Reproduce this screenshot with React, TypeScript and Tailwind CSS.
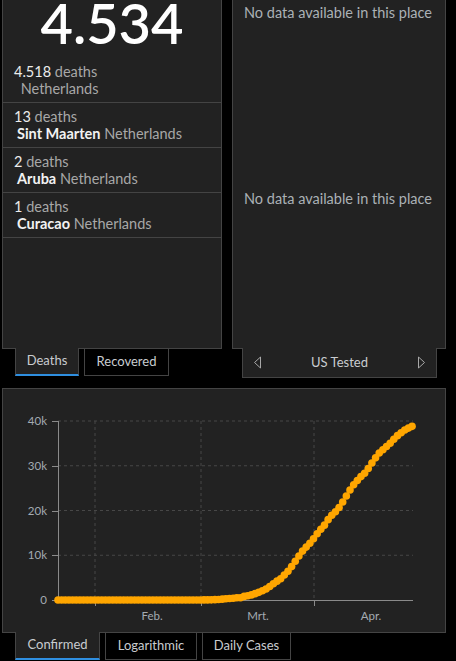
import React from "react";

const ROWS = [
  { count: "4.518", name: "", country: "Netherlands" },
  { count: "13", name: "Sint Maarten", country: "Netherlands" },
  { count: "2", name: "Aruba", country: "Netherlands" },
  { count: "1", name: "Curacao", country: "Netherlands" },
];

// cumulative confirmed, daily from Jan 22
const MARCH = [
  10, 18, 24, 38, 82, 128, 188, 265, 321, 382, 503, 503, 806, 962, 1138, 1416, 1711, 2058, 2467, 3003,
  3640, 4217, 4764, 5580, 6438, 7468, 8647, 9819, 10930, 11817, 12667,
];
const APRIL = [
  13696, 14788, 15821, 16727, 17953, 18926, 19709, 20682, 21903, 23249, 24571, 25746, 26710, 27580,
  28316, 29383, 30619, 31766, 32838, 33588, 34317, 35032, 35921, 36729, 37384, 37984, 38416, 38802,
];
const SERIES = [...Array(36).fill(0), 1, 1, 6, ...MARCH, ...APRIL];

const yOf = (v: number) => 600 - (v * 179) / 40000;
const xOf = (i: number) => 58 + i * 3.65;

function Tab({ label, active, width }: { label: string; active?: boolean; width: string }) {
  if (active) {
    return (
      <div
        className={`relative -mt-px flex h-[28px] ${width} items-center justify-center border-x border-b-2 border-x-[#444] border-b-[#2f8fe0] bg-[#222] text-[13px] text-[#c9ccd0]`}
      >
        {label}
      </div>
    );
  }
  return (
    <div
      className={`ml-[5px] flex h-[27px] ${width} items-center justify-center border-x border-b border-[#444] bg-black text-[13px] text-[#c9ccd0]`}
    >
      {label}
    </div>
  );
}

function Chart() {
  const grid = [10000, 20000, 30000, 40000];
  const ticks = [0, 10000, 20000, 30000, 40000];
  const months = [95, 201, 314];
  return (
    <svg width="442" height="243" viewBox="3 389 442 243" className="block">
      {grid.map((v) => (
        <line key={v} x1="58" x2="413" y1={yOf(v)} y2={yOf(v)} stroke="#474747" strokeDasharray="3 3" />
      ))}
      {months.map((x) => (
        <line key={x} x1={x} x2={x} y1="421" y2="600" stroke="#474747" strokeDasharray="3 3" />
      ))}
      <line x1="58.5" x2="58.5" y1="421" y2="600" stroke="#8a8a8a" />
      <line x1="58" x2="413" y1="600.5" y2="600.5" stroke="#8a8a8a" />
      {ticks.map((v) => (
        <line key={v} x1="52" x2="58" y1={Math.round(yOf(v)) + 0.5} y2={Math.round(yOf(v)) + 0.5} stroke="#8a8a8a" />
      ))}
      {months.map((x) => (
        <line key={x} x1={x + 0.5} x2={x + 0.5} y1="600" y2="606" stroke="#8a8a8a" />
      ))}
      {ticks.map((v) => (
        <text
          key={v}
          x="47"
          y={yOf(v) + 4}
          textAnchor="end"
          fontSize="11.5"
          fill="#a4abb2"
          fontFamily="Lato, sans-serif"
        >
          {v === 0 ? "0" : `${v / 1000}k`}
        </text>
      ))}
      {[
        ["Feb.", 152],
        ["Mrt.", 258],
        ["Apr.", 371],
      ].map(([t, x]) => (
        <text key={t} x={x} y="620" textAnchor="middle" fontSize="11.5" fill="#a4abb2" fontFamily="Lato, sans-serif">
          {t}
        </text>
      ))}
      {SERIES.map((v, i) => (
        <circle key={i} cx={xOf(i)} cy={yOf(v)} r="3.8" fill="#ffa600" />
      ))}
    </svg>
  );
}

export default function App() {
  return (
    <div className="h-[661px] w-[456px] overflow-hidden bg-black [font-family:Lato,sans-serif] text-[#c9ccd0]">
      <div className="flex h-[388px] pl-[2px]">
        <div className="flex w-[220px] flex-col">
          <div className="h-[349px] overflow-hidden border-x border-b border-[#444] bg-[#222]">
            <div className="h-[58px] text-center">
              <div className="text-[56px] font-semibold leading-[46px] text-white">4.534</div>
            </div>
            {ROWS.map((r) => (
              <div key={r.count} className="h-[45px] border-b border-[#444] pl-[11px] pt-[5px] text-[14.5px] leading-[17px]">
                <div className="text-[#a8a8a8]">
                  <span className="text-[#ececec]">{r.count}</span> deaths
                </div>
                <div className="pl-[3px] text-[#a8a8a8]">
                  {r.name ? <span className="font-bold text-[#f2f2f2]">{r.name}</span> : null}
                  {"\u00a0"}
                  {r.country}
                </div>
              </div>
            ))}
          </div>
          <div className="flex pl-[13px]">
            <Tab label="Deaths" active width="w-[64px]" />
            <Tab label="Recovered" width="w-[85px]" />
          </div>
        </div>

        <div className="ml-[10px] flex w-[214px] flex-col">
          <div className="h-[349px] border-x border-b border-[#444] bg-[#222] pl-[11px] text-[14.5px] leading-[17px] text-[#abb1b6]">
            <div className="h-[185px] pt-[4px]">No data available in this place</div>
            <div className="pt-[5px]">No data available in this place</div>
          </div>
          <div className="-mt-px ml-[10px] flex h-[30px] w-[195px] items-center justify-between border-x border-b border-[#444] bg-[#222] px-[10px] text-[13px] text-[#c9ccd0]">
            <svg width="9" height="13" viewBox="0 0 9 13">
              <path d="M7.5 1 L1.5 6.5 L7.5 12 Z" fill="none" stroke="#a8a8a8" strokeWidth="1" strokeLinejoin="round" />
            </svg>
            <span>US Tested</span>
            <svg width="9" height="13" viewBox="0 0 9 13">
              <path d="M1.5 1 L7.5 6.5 L1.5 12 Z" fill="none" stroke="#a8a8a8" strokeWidth="1" strokeLinejoin="round" />
            </svg>
          </div>
        </div>
      </div>

      <div className="ml-[2px] h-[245px] w-[444px] border border-[#444] bg-[#222]">
        <Chart />
      </div>
      <div className="flex pl-[15px]">
        <Tab label="Confirmed" active width="w-[85px]" />
        <Tab label="Logarithmic" width="w-[92px]" />
        <Tab label="Daily Cases" width="w-[89px]" />
      </div>
    </div>
  );
}
